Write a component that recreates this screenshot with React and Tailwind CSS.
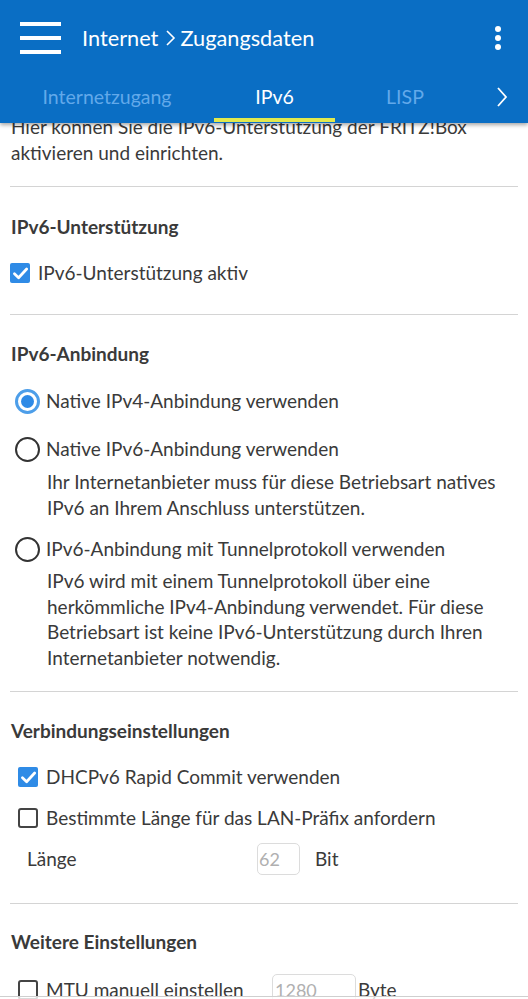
import React from "react";

const FONT = { fontFamily: "Lato, 'Noto Sans', sans-serif" };

function CheckBox({ checked }) {
  if (checked) {
    return (
      <span className="flex h-[20px] w-[20px] shrink-0 items-center justify-center rounded-[2px] bg-[#2f8be6]">
        <svg width="17" height="17" viewBox="0 0 16 16">
          <path d="M2.3 8.3 L6.2 12 L13.8 3.8" fill="none" stroke="white" strokeWidth="2.6" strokeLinecap="round" strokeLinejoin="round" />
        </svg>
      </span>
    );
  }
  return <span className="block h-[20px] w-[20px] shrink-0 rounded-[3px] border-2 border-[#444]" />;
}

function Radio({ checked }) {
  if (checked) {
    return (
      <span className="flex h-[25px] w-[25px] shrink-0 items-center justify-center rounded-full border-[3px] border-[#4d9ee9] bg-white">
        <span className="block h-[13px] w-[13px] rounded-full bg-[#2e8ae6]" />
      </span>
    );
  }
  return <span className="block h-[25px] w-[25px] shrink-0 rounded-full border-[2.5px] border-[#333]" />;
}

function Divider({ className }) {
  return <div className={"h-px bg-[#d4d4d4] " + className} />;
}

function Heading({ children, className }) {
  return (
    <div className={"flex h-[26px] items-center text-[19px] font-bold text-[#3a3a3a] " + className}>
      {children}
    </div>
  );
}

export default function App() {
  return (
    <div className="relative h-[999px] w-[528px] overflow-hidden bg-white text-[#3a3a3a]" style={FONT}>
      {/* Header */}
      <div className="absolute inset-x-0 top-0 z-10 h-[123px] bg-[#0a6ec4] shadow-[0_2px_4px_rgba(0,0,0,0.35)]">
        <div className="flex h-[76px] items-center">
          <div className="ml-[20px] flex w-[41px] flex-col gap-[10px]">
            <span className="block h-[4px] bg-white" />
            <span className="block h-[4px] bg-white" />
            <span className="block h-[4px] bg-white" />
          </div>
          <div className="ml-[21px] flex items-center text-[21.75px] text-white">
            <span>Internet</span>
            <svg width="14" height="18" viewBox="0 0 14 18" className="ml-[5px] mr-[3px]">
              <path d="M4 2 L11 9 L4 16" fill="none" stroke="white" strokeWidth="1.6" />
            </svg>
            <span>Zugangsdaten</span>
          </div>
          <div className="ml-auto mr-[27px] flex flex-col gap-[3px]">
            <span className="block h-[6px] w-[6px] rounded-full bg-white" />
            <span className="block h-[6px] w-[6px] rounded-full bg-white" />
            <span className="block h-[6px] w-[6px] rounded-full bg-white" />
          </div>
        </div>
        <div className="flex h-[47px] items-stretch text-[19.5px]">
          <div className="flex w-[214px] items-center justify-center pb-[6px] text-[#62a9ea]">Internetzugang</div>
          <div className="relative flex w-[121px] items-center justify-center pb-[6px] text-white">
            IPv6
            <span className="absolute bottom-[1px] left-0 right-0 h-[4px] bg-[#e2e94e]" />
          </div>
          <div className="flex w-[140px] items-center justify-center pb-[6px] text-[#62a9ea]">LISP</div>
          <div className="flex flex-1 items-center justify-center pb-[6px]">
            <svg width="12" height="22" viewBox="0 0 12 22">
              <path d="M2 2 L10 11 L2 20" fill="none" stroke="white" strokeWidth="1.8" />
            </svg>
          </div>
        </div>
      </div>

      {/* Content */}
      <div className="px-[10px] pt-[114px] text-[19px]">
        <p className="pl-[1px] leading-[26px]">
          Hier können Sie die IPv6-Unterstützung der FRITZ!Box aktivieren und einrichten.
        </p>

        <Divider className="mt-[20px]" />
        <Heading className="mt-[27px] pl-[1px]">IPv6-Unterstützung</Heading>
        <div className="mt-[20px] flex h-[26px] items-center gap-[8px]">
          <CheckBox checked />
          <span>IPv6-Unterstützung aktiv</span>
        </div>

        <Divider className="mt-[28px]" />
        <Heading className="mt-[26px] pl-[1px]">IPv6-Anbindung</Heading>
        <div className="mt-[21px] flex h-[26px] items-center gap-[6px] pl-[5px]">
          <Radio checked />
          <span>Native IPv4-Anbindung verwenden</span>
        </div>
        <div className="mt-[22px] flex h-[26px] items-center gap-[6px] pl-[5px]">
          <Radio />
          <span>Native IPv6-Anbindung verwenden</span>
        </div>
        <p className="mt-[7px] pl-[37px] leading-[25.5px]">
          Ihr Internetanbieter muss für diese Betriebsart natives IPv6 an Ihrem Anschluss unterstützen.
        </p>
        <div className="mt-[16px] flex h-[26px] items-center gap-[6px] pl-[5px]">
          <Radio />
          <span>IPv6-Anbindung mit Tunnelprotokoll verwenden</span>
        </div>
        <p className="mt-[6px] pl-[37px] leading-[25.5px]">
          IPv6 wird mit einem Tunnelprotokoll über eine herkömmliche IPv4-Anbindung verwendet. Für diese Betriebsart ist keine IPv6-Unterstützung durch Ihren Internetanbieter notwendig.
        </p>

        <Divider className="mt-[21px]" />
        <Heading className="mt-[26px] pl-[1px]">Verbindungseinstellungen</Heading>
        <div className="mt-[20px] flex h-[26px] items-center gap-[8px] pl-[8px]">
          <CheckBox checked />
          <span>DHCPv6 Rapid Commit verwenden</span>
        </div>
        <div className="mt-[15px] flex h-[26px] items-center gap-[8px] pl-[8px]">
          <CheckBox />
          <span>Bestimmte Länge für das LAN-Präfix anfordern</span>
        </div>
        <div className="mt-[12px] flex h-[32px] items-center pl-[17px]">
          <span className="w-[230px]">Länge</span>
          <span className="flex h-[32px] w-[43px] items-center rounded-[5px] border border-[#dcdcdc] pl-[1px] text-[18px] text-[#b0b0b0]">62</span>
          <span className="ml-[15px]">Bit</span>
        </div>

        <Divider className="mt-[28px]" />
        <Heading className="mt-[25px] pl-[1px]">Weitere Einstellungen</Heading>
        <div className="mt-[19px] flex h-[32px] items-center pl-[8px]">
          <CheckBox />
          <span className="ml-[8px] w-[226px]">MTU manuell einstellen</span>
          <span className="flex h-[32px] w-[84px] items-center rounded-[5px] border border-[#dcdcdc] pl-[2px] text-[18px] text-[#b0b0b0]">1280</span>
          <span className="ml-[2px]">Byte</span>
        </div>
      </div>

      {/* Bottom bar edge */}
      <div className="absolute inset-x-0 bottom-0 h-[3px] border-t border-[#cfcfcf] bg-white/80" />
    </div>
  );
}
